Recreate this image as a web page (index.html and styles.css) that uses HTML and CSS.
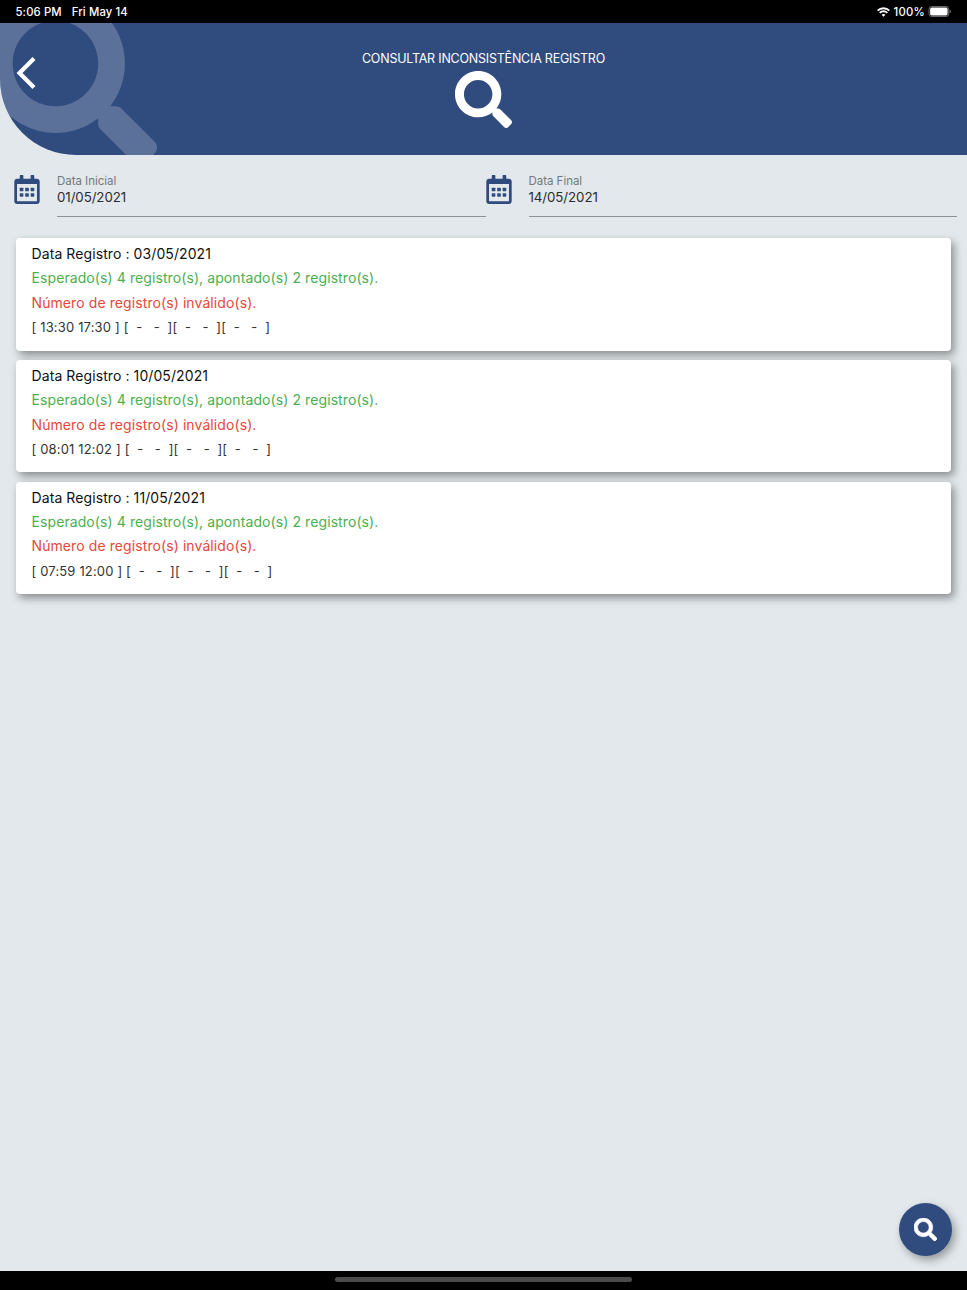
FILE: index.html
```
<!doctype html>
<html lang="pt-BR">
<head>
  <meta charset="UTF-8">
  <title>Consultar Inconsistência Registro</title>
  <link rel="stylesheet" href="styles.css">
</head>
<body>
  <svg class="defs" width="0" height="0">
    <symbol id="search" viewBox="0 0 512 512">
      <path d="M505 442.7L405.3 343c-4.500-4.500-10.600-7-17-7H372c27.600-35.300 44-79.700 44-128C416 93.100 322.900 0 208 0S0 93.100 0 208s93.100 208 208 208c48.300 0 92.700-16.400 128-44v16.300c0 6.400 2.500 12.500 7 17l99.700 99.700c9.400 9.400 24.600 9.400 33.900 0l28.300-28.300c9.400-9.400 9.400-24.600.1-34zM208 336c-70.700 0-128-57.200-128-128 0-70.700 57.200-128 128-128 70.700 0 128 57.200 128 128 0 70.700-57.200 128-128 128z"/>
    </symbol>
    <symbol id="calendar" viewBox="0 0 448 512">
      <path d="M448 112v352c0 26.500-21.500 48-48 48H48c-26.500 0-48-21.500-48-48V112c0-26.500 21.500-48 48-48h48V12c0-6.600 5.400-12 12-12h40c6.600 0 12 5.400 12 12v52h128V12c0-6.600 5.400-12 12-12h40c6.600 0 12 5.400 12 12v52h48c26.500 0 48 21.500 48 48zm-48 346V160H48v298c0 3.300 2.700 6 6 6h340c3.300 0 6-2.700 6-6z"/>
      <rect x="96" y="224" width="64" height="64" rx="12"/>
      <rect x="192" y="224" width="64" height="64" rx="12"/>
      <rect x="288" y="224" width="64" height="64" rx="12"/>
      <rect x="96" y="320" width="64" height="64" rx="12"/>
      <rect x="192" y="320" width="64" height="64" rx="12"/>
      <rect x="288" y="320" width="64" height="64" rx="12"/>
    </symbol>
  </svg>

  <div class="app">
    <div class="status">
      <span class="time">5:06 PM</span>
      <span class="day">Fri May 14</span>
      <svg class="wifi" viewBox="0 0 12 9">
        <path d="M.6 3.300a7.600 7.600 0 0 1 10.800 0M2.500 5.300a4.900 4.900 0 0 1 7 0"/>
        <path class="dot" d="M6 8.900L4.200 7.100a2.600 2.600 0 0 1 3.600 0z"/>
      </svg>
      <span class="percent">100%</span>
      <svg class="battery" viewBox="0 0 25 12">
        <rect class="case" x=".5" y=".5" width="21.500" height="11" rx="3"/>
        <rect x="1.700" y="1.700" width="19.100" height="8.600" rx="1.800"/>
        <path class="tip" d="M23 4v4q1.500-.6 1.500-2T23 4z"/>
      </svg>
    </div>

    <header class="header">
      <svg class="shade"><use href="#search"/></svg>
      <svg class="back" viewBox="0 0 20 32"><path d="M18 1.500L3.500 16 18 30.500"/></svg>
      <h1>CONSULTAR INCONSISTÊNCIA REGISTRO</h1>
      <svg class="icon"><use href="#search"/></svg>
    </header>

    <div class="filters">
      <div class="field">
        <svg class="cal"><use href="#calendar"/></svg>
        <div class="input">
          <label>Data Inicial</label>
          <span>01/05/2021</span>
        </div>
      </div>
      <div class="field">
        <svg class="cal"><use href="#calendar"/></svg>
        <div class="input">
          <label>Data Final</label>
          <span>14/05/2021</span>
        </div>
      </div>
    </div>

    <main class="list">
      <div class="card">
        <p class="date">Data Registro : 03/05/2021</p>
        <p class="expected">Esperado(s) 4 registro(s), apontado(s) 2 registro(s).</p>
        <p class="error">Número de registro(s) inválido(s).</p>
        <p class="hours">[ 13:30 17:30 ] [  -   -  ][  -   -  ][  -   -  ]</p>
      </div>
      <div class="card">
        <p class="date">Data Registro : 10/05/2021</p>
        <p class="expected">Esperado(s) 4 registro(s), apontado(s) 2 registro(s).</p>
        <p class="error">Número de registro(s) inválido(s).</p>
        <p class="hours">[ 08:01 12:02 ] [  -   -  ][  -   -  ][  -   -  ]</p>
      </div>
      <div class="card">
        <p class="date">Data Registro : 11/05/2021</p>
        <p class="expected">Esperado(s) 4 registro(s), apontado(s) 2 registro(s).</p>
        <p class="error">Número de registro(s) inválido(s).</p>
        <p class="hours">[ 07:59 12:00 ] [  -   -  ][  -   -  ][  -   -  ]</p>
      </div>
    </main>

    <button class="fab"><svg><use href="#search"/></svg></button>
    <div class="bottom"><div class="handle"></div></div>
  </div>
</body>
</html>
```
FILE: styles.css
```
*{box-sizing:border-box;}
body{margin:0;font-family:Inter,"Liberation Sans",sans-serif;background:#e2e8eb;}
p,h1{margin:0;font-weight:400;}
svg{display:block;flex:none;}
.defs{position:absolute;}
.app{
  position:relative;
  display:flex;
  flex-direction:column;
  height:1290px;
  overflow:hidden;
}

/* status bar */
.status{
  display:flex;
  align-items:center;
  height:23px;
  padding:0 15px 0 15.500px;
  background:#000;
  color:#fff;
  font-size:11.3px;
  font-weight:500;
  letter-spacing:.12px;
  white-space:nowrap;
}
.day{margin-left:10px;}
.wifi{width:13px;height:10px;margin-left:auto;}
.wifi path{fill:none;stroke:#fff;stroke-width:1.7;}
.wifi .dot{fill:#fff;stroke:none;}
.percent{margin:0 3px 0 4px;letter-spacing:.25px;}
.battery{width:24px;height:11px;fill:#fff;}
.battery .case{fill:none;stroke:#777;}
.battery .tip{fill:#777;}

/* header */
.header{
  position:relative;
  display:flex;
  flex-direction:column;
  align-items:center;
  height:132px;
  padding-top:27px;
  overflow:hidden;
  background:#304b7e;
  border-bottom-left-radius:76px;
  color:#fff;
}
.header h1{font-size:12.5px;line-height:18px;letter-spacing:-.22px;}
.icon{width:57px;height:57px;margin-top:3px;fill:#fff;}
.shade{
  position:absolute;
  left:-14.500px;top:-29px;
  width:171px;height:171px;
  fill:rgba(255,255,255,.21);
}
.back{position:absolute;left:16px;top:34px;width:20px;height:32px;}
.back path{fill:none;stroke:#fff;stroke-width:4.2;}

/* date filters */
.filters{display:flex;padding:20px 10px 0 14px;}
.field{display:flex;flex:1;}
.cal{width:26px;height:29px;fill:#304b7e;}
.input{
  display:flex;
  flex-direction:column;
  flex:1;
  height:42px;
  margin-left:17px;
  border-bottom:1px solid #8d9294;
  color:#2b2d2e;
}
.input label{font-size:11.5px;line-height:13px;color:#75797b;letter-spacing:-.03px;}
.input span{font-size:13.3px;line-height:18px;letter-spacing:-.08px;}

/* cards */
.list{
  display:flex;
  flex-direction:column;
  gap:9.3px;
  padding:21px 16px 0;
}
.card{
  height:112.5px;
  padding:4px 15.500px;
  background:#fff;
  border-radius:4px;
  box-shadow:3px 4px 8px rgba(0,0,0,.4);
  font-size:14px;
  line-height:24.400px;
  letter-spacing:.09px;
}
.date{color:#111;}
.expected{color:#4caf50;}
.error{color:#e5483d;}
.hours{font-size:13px;letter-spacing:.16px;color:#333;white-space:pre;}

.fab{
  position:absolute;
  right:15.500px;bottom:34.500px;
  display:flex;
  align-items:center;
  justify-content:center;
  width:53px;height:53px;
  padding:0;
  border:0;
  border-radius:50%;
  background:#304b7e;
  box-shadow:3px 4px 9px rgba(0,0,0,.35);
}
.fab svg{width:23px;height:23px;fill:#fff;stroke:#fff;stroke-width:14px;}

.bottom{
  display:flex;
  justify-content:center;
  height:19px;
  margin-top:auto;
  padding-top:6px;
  background:#000;
}
.handle{width:297px;height:5px;border-radius:3px;background:#4b4b4b;}
```
